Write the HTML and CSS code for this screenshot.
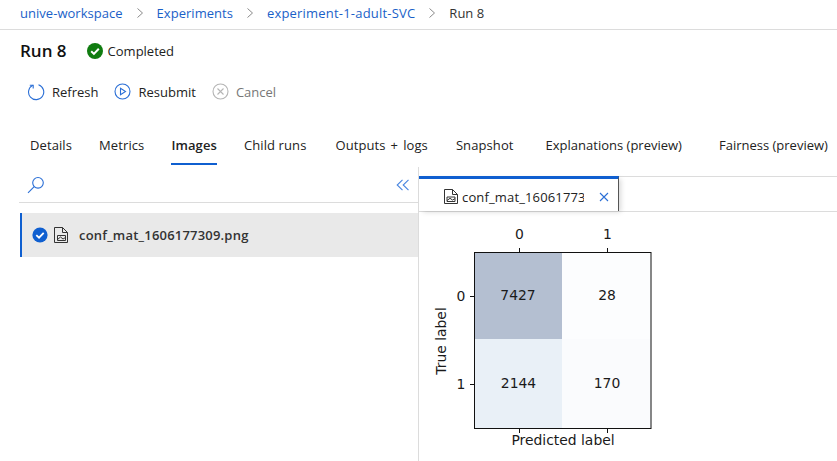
FILE: index.html
```html
<!DOCTYPE html>
<html lang="en">
<head>
<meta charset="utf-8">
<title>Run 8</title>
<link rel="stylesheet" href="styles.css">
</head>
<body>
<nav class="crumbs">
  <a class="crumb">unive-workspace</a>
  <svg class="chev" width="8" height="12" viewBox="0 0 8 12"><path d="M1.5 1.5 6.5 6l-5 4.500"/></svg>
  <a class="crumb">Experiments</a>
  <svg class="chev" width="8" height="12" viewBox="0 0 8 12"><path d="M1.5 1.500 6.500 6l-5 4.500"/></svg>
  <a class="crumb crumb-long">experiment-1-adult-SVC</a>
  <svg class="chev" width="8" height="12" viewBox="0 0 8 12"><path d="M1.5 1.500 6.500 6l-5 4.500"/></svg>
  <span class="crumb-current">Run 8</span>
</nav>
<header class="title-row">
  <h1 class="title">Run 8</h1>
  <svg class="status-icon" width="16" height="16" viewBox="0 0 16 16"><circle cx="8" cy="8" r="8" fill="#107c10"/><path d="M4.200 8.300 6.900 10.900 11.800 5.800" fill="none" stroke="#fff" stroke-width="2"/></svg>
  <span class="status">Completed</span>
</header>
<div class="commands">
  <button class="cmd">
    <svg width="18" height="18" viewBox="0 0 18 18" fill="none" stroke="#2b6fd6" stroke-width="1.100"><path d="M5.800 2.200A7.600 7.600 0 1 0 11.500 1.800"/><path d="M2.800 2.200H6.200V5.600"/></svg>
    <span>Refresh</span>
  </button>
  <button class="cmd">
    <svg width="17" height="17" viewBox="0 0 17 17" fill="none" stroke="#2b6fd6" stroke-width="1.100"><circle cx="8.500" cy="8.500" r="7.500"/><path d="M6.500 5.200v6.600l5-3.300z"/></svg>
    <span>Resubmit</span>
  </button>
  <button class="cmd cmd-off">
    <svg width="17" height="17" viewBox="0 0 17 17" fill="none" stroke="#b5b5b5" stroke-width="1.100"><circle cx="8.500" cy="8.500" r="7.500"/><path d="M5.500 5.500l6 6M11.500 5.500l-6 6"/></svg>
    <span>Cancel</span>
  </button>
</div>
<div class="tabs">
  <a class="tab">Details</a>
  <a class="tab">Metrics</a>
  <a class="tab tab-on">Images</a>
  <a class="tab">Child runs</a>
  <a class="tab tab-wide">Outputs + logs</a>
  <a class="tab">Snapshot</a>
  <a class="tab tab-far">Explanations (preview)</a>
  <a class="tab tab-farther">Fairness (preview)</a>
</div>
<main class="split">
  <section class="files">
    <div class="search-row">
      <svg width="18" height="18" viewBox="0 0 18 18" fill="none" stroke="#2b6fd6" stroke-width="1.100"><circle cx="11" cy="6.800" r="5.300"/><path d="M7.200 10.600 1 16.800"/></svg>
      <svg width="14" height="12" viewBox="0 0 14 12" fill="none" stroke="#4a86e0" stroke-width="1.100"><path d="M6.500.8 1.200 6l5.300 5.200M12.500.8 7.200 6l5.300 5.200"/></svg>
    </div>
    <div class="file-row">
      <svg width="16" height="16" viewBox="0 0 16 16"><circle cx="8" cy="8" r="7.600" fill="#0f5fd0"/><path d="M4.300 8.200 7 10.700 11.700 5.800" fill="none" stroke="#fff" stroke-width="1.800"/></svg>
      <svg class="file-icon" width="15" height="16" viewBox="0 0 15 16" fill="none" stroke="#333" stroke-width="1"><path d="M.5.500h8l5 5v10H.500z"/><path d="M8.500.500v5h5"/><path d="M3.500 8.500h8v5h-8z"/><path d="M3.500 12.500l3-2.500 2.500 2 2.500-1.500"/></svg>
      <span class="file-name">conf_mat_1606177309.png</span>
    </div>
  </section>
  <section class="viewer">
    <div class="doc-tabs">
      <div class="doc-tab">
        <svg class="doc-icon" width="14" height="15" viewBox="0 0 14 15" fill="none" stroke="#333" stroke-width="1"><path d="M.5.500h8l5 5v9H.500z"/><path d="M8.500.500v5h5"/><path d="M3 8h8v4.500H3z"/><path d="M3 11.500l3-2.200 2.500 1.700 2.500-1.300"/></svg>
        <span class="doc-name">conf_mat_1606177309.png</span>
        <svg class="doc-close" width="10" height="10" viewBox="0 0 10 10" fill="none" stroke="#2b6fd6" stroke-width="1.100"><path d="M1 1l8 8M9 1l-8 8"/></svg>
      </div>
    </div>
    <svg class="plot" width="419" height="249" viewBox="419 212 419 249">
      <rect x="474.500" y="252.500" width="87.500" height="86.500" fill="#b4bfd1"/>
      <rect x="562" y="252.500" width="89" height="86.500" fill="#fcfdfe"/>
      <rect x="474.500" y="339" width="87.500" height="89.500" fill="#e9f0f7"/>
      <rect x="562" y="339" width="89" height="89.500" fill="#fafbfd"/>
      <rect x="474.500" y="252.500" width="176.500" height="176" fill="none" stroke="#111" stroke-width="1"/>
      <path d="M519.500 252v-4M607.500 252v-4M474 296.500h-4M474 384.500h-4M519.500 429v4M607.500 429v4" stroke="#111" stroke-width="1"/>
      <g class="plot-text">
        <text x="519.500" y="239" text-anchor="middle">0</text>
        <text x="607.500" y="239" text-anchor="middle">1</text>
        <text x="461" y="301" text-anchor="middle">0</text>
        <text x="461" y="389" text-anchor="middle">1</text>
        <text x="518" y="300" text-anchor="middle">7427</text>
        <text x="607" y="300" text-anchor="middle">28</text>
        <text x="518.500" y="388" text-anchor="middle">2144</text>
        <text x="607" y="388" text-anchor="middle">170</text>
        <text x="563" y="445" text-anchor="middle">Predicted label</text>
        <text transform="translate(446 341) rotate(-90)" text-anchor="middle">True label</text>
      </g>
    </svg>
  </section>
</main>
</body>
</html>
```

FILE: styles.css
```css
* { box-sizing: border-box; }
html, body { margin: 0; height: 100%; overflow: hidden; }
body {
  width: 837px;
  height: 461px;
  background: #fff;
  color: #201f1e;
  font-family: "Open Sans", "Noto Sans", sans-serif;
  font-size: 13px;
  display: flex;
  flex-direction: column;
}
.crumbs {
  height: 30px;
  flex: none;
  display: flex;
  align-items: center;
  padding: 0 0 3px 20px;
  border-bottom: 1px solid #dcdcdc;
  white-space: nowrap;
}
.crumb { color: #1a5fc8; letter-spacing: 0.03px; }
.crumb-long { letter-spacing: 0.2px; }
.crumb-current { color: #333; }
.chev { margin: 0 13px 0 13px; fill: none; stroke: #8a8a8a; stroke-width: 1; }
.title-row {
  height: 41px;
  flex: none;
  display: flex;
  align-items: center;
  padding-left: 20px;
}
.title { margin: 0 20px 0 0; font-size: 17px; font-weight: 600; color: #111; }
.status-icon { margin-right: 5px; }
.status { color: #222; }
.commands {
  height: 41px;
  flex: none;
  display: flex;
  align-items: center;
  padding-left: 27px;
  gap: 16px;
}
.cmd {
  display: flex;
  align-items: center;
  gap: 7px;
  padding: 0;
  border: 0;
  background: none;
  font: inherit;
  color: #222;
}
.cmd-off { color: #777; }
.tabs {
  height: 54px;
  margin-top: 4px;
  flex: none;
  display: flex;
  align-items: flex-start;
  padding: 20px 0 0 30px;
  gap: 27px;
  white-space: nowrap;
  letter-spacing: 0.1px;
}
.tab { height: 29px; padding-bottom: 5px; color: #222; }
.tab-on { font-weight: 600; border-bottom: 2px solid #0f5fd0; }
.tab-wide { margin-left: 2px; margin-right: 1px; word-spacing: 1.500px; }
.tab-far { margin-left: 5px; letter-spacing: 0; }
.tab-farther { margin-left: 10px; letter-spacing: 0; }
.split { flex: 1; display: flex; min-height: 0; margin-top: -3px; }
.files { width: 399px; margin-left: 19px; flex: none; }
.search-row {
  height: 36px;
  display: flex;
  align-items: center;
  justify-content: space-between;
  padding: 0 8px 0 8px;
  border-bottom: 1px solid #dcdcdc;
}
.file-row {
  height: 44px;
  margin: 10px 0 0 1px;
  display: flex;
  align-items: center;
  padding-left: 10px;
  background: #e9e9e9;
  border-left: 2px solid #0f5fd0;
}
.file-icon { margin-left: 6px; }
.file-name { margin-left: 10px; font-weight: 600; color: #333; letter-spacing: 0.2px; }
.viewer { flex: 1; min-width: 0; border-left: 1px solid #dcdcdc; display: flex; flex-direction: column; }
.doc-tabs {
  height: 36px;
  margin-top: 9px;
  flex: none;
  border-top: 1px solid #dcdcdc;
  border-bottom: 1px solid #dcdcdc;
}
.doc-tab {
  width: 200px;
  height: 35px;
  margin-top: -1px;
  display: flex;
  align-items: center;
  padding: 3px 0 0 25px;
  background: #fff;
  border-top: 3px solid #0f5fd0;
  border-right: 1px solid #555;
  box-shadow: 3px 2px 5px -1px rgba(0, 0, 0, 0.15);
}
.doc-icon { flex: none; margin-right: 4px; }
.doc-name { width: 122px; overflow: hidden; white-space: nowrap; color: #222; letter-spacing: 0.15px; }
.doc-close { flex: none; margin-left: 15px; }
.plot { display: block; flex: none; }
.plot-text { font-family: "DejaVu Sans", sans-serif; font-size: 13.900px; fill: #1a1a1a; }
```
